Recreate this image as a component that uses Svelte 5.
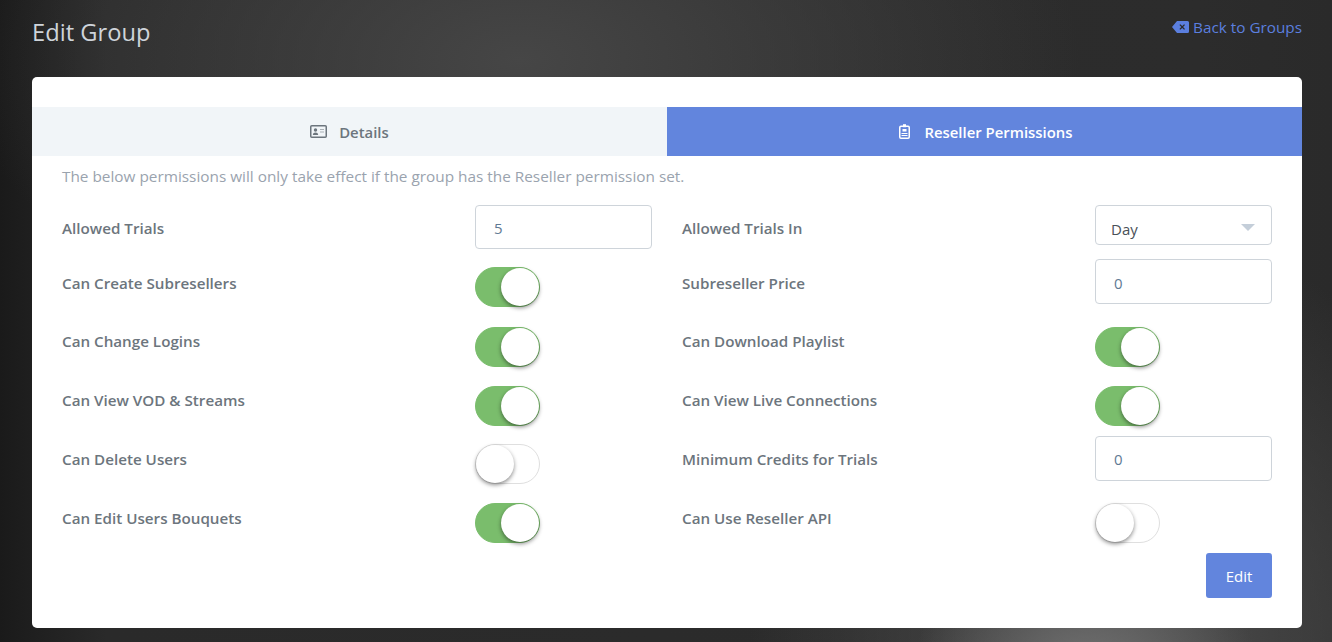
<script>
  const rows = [
    [{ label: 'Allowed Trials', kind: 'input', value: '5' }, { label: 'Allowed Trials In', kind: 'select', value: 'Day' }],
    [{ label: 'Can Create Subresellers', kind: 'toggle', on: true }, { label: 'Subreseller Price', kind: 'input', value: '0' }],
    [{ label: 'Can Change Logins', kind: 'toggle', on: true }, { label: 'Can Download Playlist', kind: 'toggle', on: true }],
    [{ label: 'Can View VOD & Streams', kind: 'toggle', on: true }, { label: 'Can View Live Connections', kind: 'toggle', on: true }],
    [{ label: 'Can Delete Users', kind: 'toggle', on: false }, { label: 'Minimum Credits for Trials', kind: 'input', value: '0' }],
    [{ label: 'Can Edit Users Bouquets', kind: 'toggle', on: true }, { label: 'Can Use Reseller API', kind: 'toggle', on: false }]
  ];
</script>

<div class="page">
  <header class="head">
    <h1>Edit Group</h1>
    <a class="back" href="#back">
      <svg width="17" height="12" viewBox="0 0 17 12"><path fill-rule="evenodd" d="M5 0h10.500A1.500 1.500 0 0 1 17 1.500v9a1.500 1.500 0 0 1-1.500 1.500H5L0 6zM8.300 3.200l-.9.9L9.300 6l-1.900 1.900.9.9 1.900-1.900 1.900 1.900.9-.9L11.100 6l1.900-1.900-.9-.9-1.900 1.900z" fill="#5b7fdf"/></svg>
      Back to Groups
    </a>
  </header>

  <main class="card">
    <nav class="tabs">
      <div class="tab">
        <svg width="17" height="13" viewBox="0 0 17 13" fill="none"><rect x=".75" y=".75" width="15.500" height="11.500" rx="1" stroke="#6c757d" stroke-width="1.500"/><circle cx="5.500" cy="5" r="1.700" fill="#6c757d"/><path d="M2.800 10c.2-1.800 1.300-2.500 2.700-2.500s2.500.7 2.700 2.500z" fill="#6c757d"/><path d="M10 4.500h4M10 7h4" stroke="#a9afb5" stroke-width="1"/></svg>
        <span>Details</span>
      </div>
      <div class="tab active">
        <svg width="11" height="15" viewBox="0 0 11 15" fill="none"><rect x=".75" y="2.250" width="9.500" height="12" rx="1.200" stroke="#fff" stroke-width="1.500"/><rect x="4" y=".2" width="3" height="3" fill="#fff"/><rect x="3.500" y="5" width="4" height="2.500" fill="#fff"/><path d="M2.500 9.500h6M2.500 11.500h6" stroke="#fff"/></svg>
        <span>Reseller Permissions</span>
      </div>
    </nav>
    <div class="body">
      <p class="note">The below permissions will only take effect if the group has the Reseller permission set.</p>
      <div class="grid">
        {#each rows as row, i}
          <div class="row row{i}">
            {#each row as f}
              <div class="field">
                <span class="label">{f.label}</span>
                <div class="control">
                  {#if f.kind === 'input'}
                    <div class="input">{f.value}</div>
                  {:else if f.kind === 'select'}
                    <div class="select"><span>{f.value}</span><i class="caret"></i></div>
                  {:else}
                    <div class="toggle" class:on={f.on}><i class="knob"></i></div>
                  {/if}
                </div>
              </div>
            {/each}
          </div>
        {/each}
      </div>
      <div class="actions"><button>Edit</button></div>
    </div>
  </main>
</div>

<style>
  :global(body) {
    margin: 0;
    background: #2a2a2a;
  }
  .page {
    box-sizing: border-box;
    width: 1332px;
    height: 642px;
    overflow: hidden;
    padding: 0 30px 0 32px;
    font-family: "Open Sans", "Noto Sans", sans-serif;
    background:
      radial-gradient(ellipse 170px 110px at 1085px 660px, #6e6e6e 0%, rgba(110,110,110,0) 100%),
      radial-gradient(ellipse 380px 420px at 1130px 650px, #4e4e4e 0%, rgba(78,78,78,0) 100%),
      radial-gradient(ellipse 560px 300px at 520px 60px, #464646 0%, rgba(70,70,70,0) 100%),
      linear-gradient(90deg, #1a1a1a 0%, #2a2a2a 8%, #2c2c2c 90%, #2a2a2a 100%);
  }
  .head {
    height: 77px;
    display: flex;
    justify-content: space-between;
    align-items: flex-start;
  }
  h1 {
    margin: 16px 0 0;
    font-size: 23.700px;
    line-height: 32px;
    font-weight: 400;
    color: #ced4da;
  }
  .back {
    margin-top: 17px;
    color: #5b7fdf;
    font-size: 15.300px;
    line-height: 20px;
    text-decoration: none;
    display: flex;
    align-items: center;
    gap: 4px;
  }
  .card {
    height: 551px;
    background: #fff;
    border-radius: 5px;
    padding-top: 30px;
    box-sizing: border-box;
  }
  .tabs {
    display: grid;
    grid-template-columns: 1fr 1fr;
    height: 49px;
  }
  .tab {
    display: flex;
    align-items: center;
    justify-content: center;
    gap: 12px;
    background: #f1f5f8;
    color: #6c757d;
    font-size: 14.900px;
    font-weight: 600;
    line-height: 22px;
  }
  .tab span {
    padding-top: 1px;
  }
  .tab.active {
    background: #6285dd;
    color: #fff;
    gap: 14px;
    padding-left: 3px;
  }
  .body {
    padding: 0 30px;
  }
  .note {
    margin: 0;
    height: 49px;
    padding-top: 9px;
    box-sizing: border-box;
    font-size: 15.350px;
    line-height: 22px;
    color: #9aa3ae;
  }
  .row {
    display: grid;
    grid-template-columns: 590px 590px;
    column-gap: 30px;
    height: 59px;
  }
  .row0 { height: 54px; margin-top: 0; }
  .field {
    display: grid;
    grid-template-columns: 413px 1fr;
    align-items: start;
  }
  .label {
    color: #6c757d;
    font-size: 15.200px;
    font-weight: 600;
    line-height: 22px;
    padding-top: 12px;
  }
  .row1 .label { padding-top: 13px; }
  .control {
    width: 177px;
  }
  .input, .select {
    box-sizing: border-box;
    width: 177px;
    height: 44px;
    border: 1px solid #ced4da;
    border-radius: 4px;
    padding: 1px 18px 0;
    display: flex;
    align-items: center;
    font-size: 15px;
    color: #5f7a94;
  }
  .row1 .input { height: 45px; padding-top: 2px; }
  .row4 .input { height: 45px; }
  .select {
    justify-content: space-between;
    padding: 7px 16px 0 15px;
    height: 40px;
    color: #495057;
  }
  .caret {
    width: 0;
    height: 0;
    margin-top: -3px;
    border-left: 7px solid transparent;
    border-right: 7px solid transparent;
    border-top: 7px solid #c4ced9;
  }
  .toggle {
    position: relative;
    box-sizing: border-box;
    width: 65px;
    height: 40px;
    border-radius: 20px;
    border: 1px solid #dfdfdf;
    background: #fff;
    margin-top: 8px;
  }
  .row2 .toggle, .row3 .toggle {
    margin-top: 9px;
  }
  .toggle.on {
    background: #7abd6c;
    border-color: #7abd6c;
  }
  .knob {
    position: absolute;
    top: 0;
    left: 0;
    width: 38px;
    height: 38px;
    border-radius: 50%;
    background: #fff;
    box-shadow: 0 2px 4px rgba(0, 0, 0, 0.45);
  }
  .toggle.on .knob {
    left: 25px;
  }
  .actions {
    display: flex;
    justify-content: flex-end;
    margin-top: -1px;
  }
  button {
    width: 66px;
    height: 45px;
    border: 0;
    border-radius: 3px;
    background: #6285dd;
    color: #fff;
    font: 400 15px "Open Sans", "Noto Sans", sans-serif;
  }
</style>
